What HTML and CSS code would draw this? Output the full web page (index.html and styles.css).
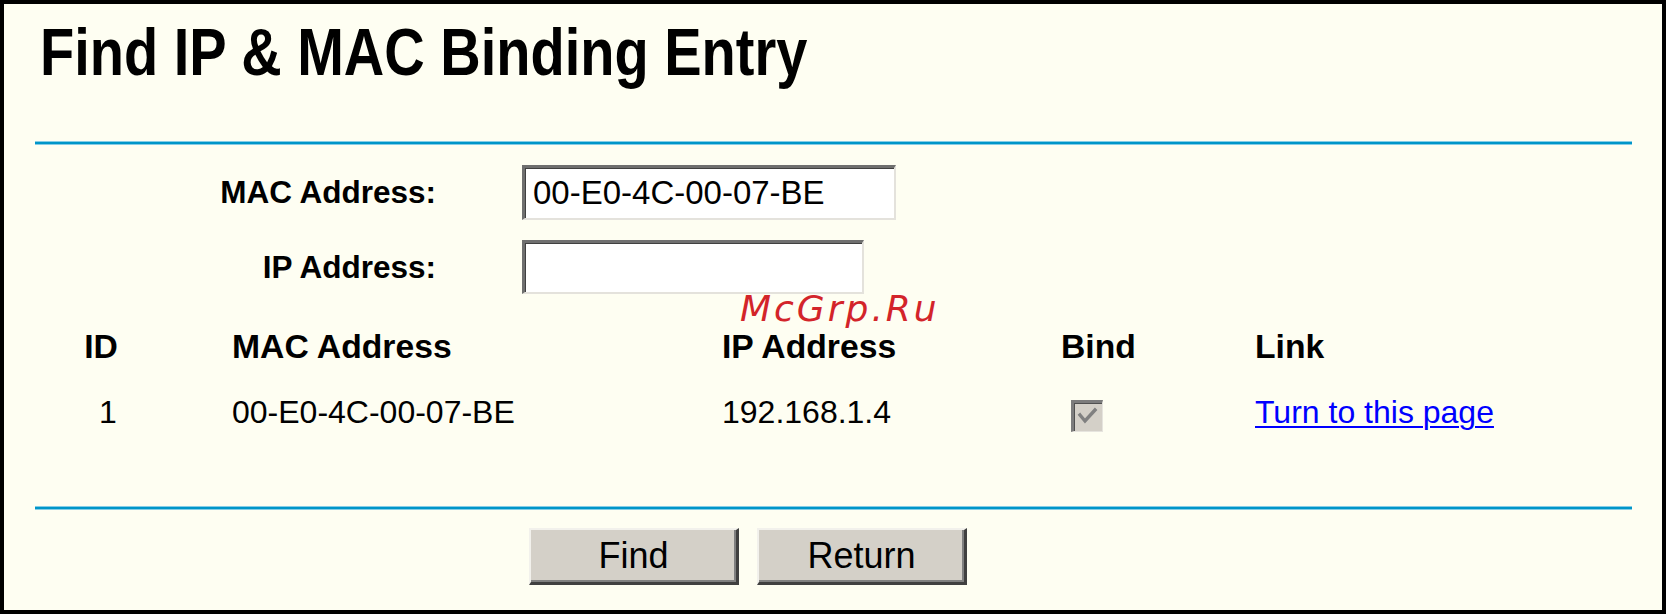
FILE: index.html
```html
<!DOCTYPE html>
<html>
<head>
<meta charset="utf-8">
<title>Find IP &amp; MAC Binding Entry</title>
<link rel="stylesheet" href="styles.css">
</head>
<body>
<div class="frame">
  <h1 class="title"><span class="title-text">Find IP &amp; MAC Binding Entry</span></h1>
  <div class="content">
    <div class="rule"></div>
    <div class="form">
      <label class="label">MAC Address:</label>
      <input class="field field-mac" type="text" value="00-E0-4C-00-07-BE">
      <label class="label">IP Address:</label>
      <input class="field field-ip" type="text" value="">
    </div>
    <div class="table">
      <div class="row head">
        <div class="c-id">ID</div>
        <div>MAC Address</div>
        <div>IP Address</div>
        <div>Bind</div>
        <div>Link</div>
      </div>
      <div class="row data">
        <div class="c-id">1</div>
        <div>00-E0-4C-00-07-BE</div>
        <div>192.168.1.4</div>
        <div><span class="cb"><svg viewBox="0 0 26 26" width="26" height="26"><polyline points="5,11 10,17 20,6" fill="none" stroke="#808080" stroke-width="3.4" stroke-linejoin="miter" stroke-linecap="square"/></svg></span></div>
        <div><a class="link" href="#">Turn to this page</a></div>
      </div>
    </div>
    <div class="rule rule-bottom"></div>
    <div class="buttons">
      <button class="btn" type="button">Find</button>
      <button class="btn" type="button">Return</button>
    </div>
  </div>
  <div class="watermark">McGrp.Ru</div>
</div>
</body>
</html>
```

FILE: styles.css
```css
html, body {
  margin: 0;
  padding: 0;
  background: #000;
}

.frame {
  position: relative;
  width: 1666px;
  height: 614px;
  box-sizing: border-box;
  border: 4px solid #000;
  background: #fefef2;
  font-family: "Liberation Sans", Arial, sans-serif;
  color: #000;
  overflow: hidden;
}

.title {
  margin: 0;
  height: 55px;
  padding: 17px 0 2px 36px;
  font-size: 56px;
  line-height: 55px;
  font-weight: bold;
}

.title-text {
  display: inline-block;
  transform: scaleY(1.18);
  transform-origin: 0 7px;
}

.content {
  margin-left: 31px;
  width: 1597px;
}

.rule {
  margin-top: 63px;
  height: 4px;
  background: linear-gradient(#86cde6 0, #86cde6 1px, #0096c9 1px, #0096c9 3px, #86cde6 3px);
}

.rule-bottom {
  margin-top: 61px;
}

.form {
  display: grid;
  grid-template-columns: 401px auto;
  column-gap: 86px;
  row-gap: 20px;
  align-items: center;
  justify-items: start;
  padding-top: 20px;
}

.label {
  justify-self: end;
  font-size: 31.5px;
  font-weight: bold;
}

.field {
  box-sizing: border-box;
  margin: 0;
  padding: 0 0 0 8px;
  background: #fff;
  border-style: solid;
  border-width: 3px 2px 2px 3px;
  border-color: #6f6f6f #e4e2dc #e4e2dc #6f6f6f;
  box-shadow: inset 1px 1px 0 #404040;
  font-family: "Liberation Sans", Arial, sans-serif;
  font-size: 33px;
  color: #000;
  outline: none;
}

.field-mac {
  width: 374px;
  height: 55px;
}

.field-ip {
  width: 342px;
  height: 54px;
}

.table {
  margin-top: 19px;
}

.row {
  display: grid;
  grid-template-columns: 197px 490px 339px 194px 1fr;
  align-items: center;
  height: 66px;
}

.head {
  font-size: 33.7px;
  font-weight: bold;
}

.data {
  font-size: 32px;
}

.c-id {
  text-align: center;
  padding-right: 65px;
}

.data .c-id {
  padding-left: 14px;
}

.cb {
  display: flex;
  align-items: center;
  justify-content: center;
  box-sizing: border-box;
  width: 32px;
  height: 32px;
  margin: 8px 0 0 10px;
  background: #d4d0c8;
  border-style: solid;
  border-width: 3px 1px 1px 3px;
  border-color: #7c7c7c #e6e4de #e6e4de #7c7c7c;
  box-shadow: inset 1px 1px 0 #505050;
}

.link {
  color: #0000ff;
  text-decoration: underline;
  text-underline-offset: 3px;
  text-decoration-thickness: 2px;
}

.buttons {
  display: flex;
  gap: 18px;
  margin: 18px 0 0 494px;
}

.btn {
  box-sizing: border-box;
  width: 210px;
  height: 57px;
  margin: 0;
  padding: 0;
  background: #d4d0c8;
  border-style: solid;
  border-width: 2px 3px 3px 2px;
  border-color: #f2f1ec #404040 #404040 #f2f1ec;
  box-shadow: inset -2px -2px 0 #808080;
  font-family: "Liberation Sans", Arial, sans-serif;
  font-size: 36px;
  color: #000;
}

.watermark {
  position: absolute;
  left: 736px;
  top: 287px;
  font-family: "DejaVu Sans", sans-serif;
  font-style: oblique;
  font-size: 36px;
  line-height: 36px;
  letter-spacing: 3px;
  color: #d3242a;
}
```
